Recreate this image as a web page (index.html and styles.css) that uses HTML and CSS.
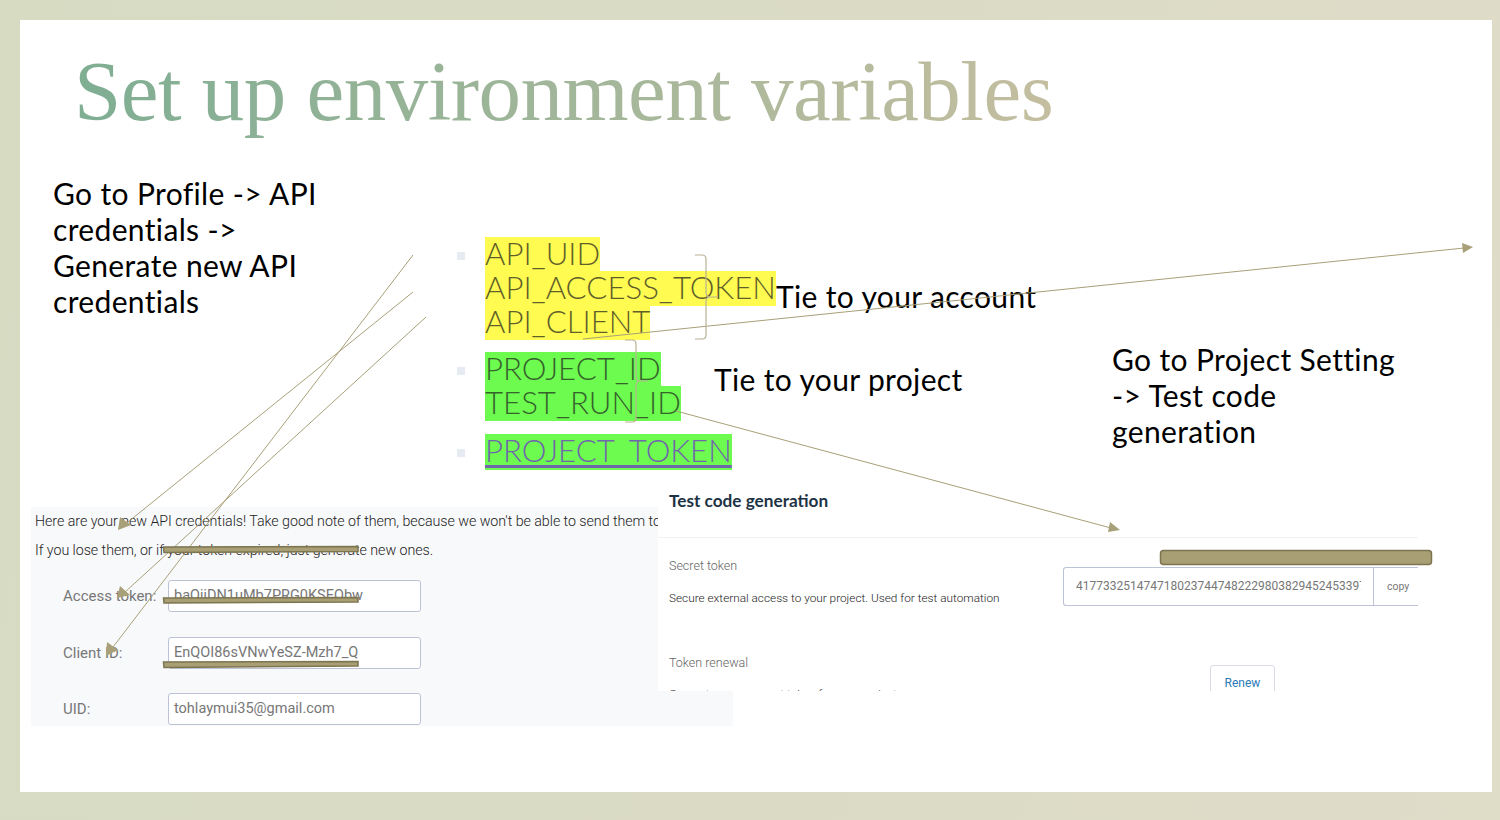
FILE: index.html
```html
<!DOCTYPE html>
<html lang="en">
<head>
<meta charset="utf-8">
<title>Set up environment variables</title>
<link rel="stylesheet" href="styles.css">
</head>
<body>
<main class="slide">
  <h1 class="title">Set up environment variables</h1>
  <p class="note note-profile">Go to Profile -&gt; API<br>credentials -&gt;<br>Generate new API<br>credentials</p>
  <ul class="vars">
    <li class="var-group">
      <span class="hl yellow"><span class="hl-text">API_UID</span></span>
      <span class="hl yellow"><span class="hl-text">API_ACCESS_TOKEN</span></span>
      <span class="hl yellow"><span class="hl-text">API_CLIENT</span></span>
    </li>
    <li class="var-group">
      <span class="hl green"><span class="hl-text">PROJECT_ID</span></span>
      <span class="hl green"><span class="hl-text">TEST_RUN_ID</span></span>
    </li>
    <li class="var-group">
      <a class="hl green link"><span class="hl-text">PROJECT_TOKEN</span></a>
    </li>
  </ul>
  <p class="note note-account">Tie to your account</p>
  <p class="note note-project">Tie to your project</p>
  <p class="note note-setting">Go to Project Setting<br>-&gt; Test code<br>generation</p>

  <section class="shot creds">
    <p class="creds-line">Here are your new API credentials! Take good note of them, because we won't be able to send them to you again.</p>
    <p class="creds-line">If you lose them, or if your token expired, just generate new ones.</p>
    <div class="field"><span class="field-label">Access token:</span><span class="field-input">baQjjDN1uMb7PRG0KSEQbw</span></div>
    <div class="field"><span class="field-label">Client ID:</span><span class="field-input">EnQOI86sVNwYeSZ-Mzh7_Q</span></div>
    <div class="field"><span class="field-label">UID:</span><span class="field-input">tohlaymui35@gmail.com</span></div>
  </section>

  <section class="shot testcode">
    <h2 class="tc-title">Test code generation</h2>
    <div class="tc-row">
      <div class="tc-text">
        <h3 class="tc-label">Secret token</h3>
        <p class="tc-desc">Secure external access to your project. Used for test automation</p>
      </div>
      <div class="token-group"><span class="token-value"><span class="token-digits">4177332514747180237447482229803829452453397</span></span><span class="token-copy">copy</span></div>
    </div>
    <div class="tc-row tc-row-renew">
      <div class="tc-text">
        <h3 class="tc-label">Token renewal</h3>
        <p class="tc-desc">Generate a new secret token for your project</p>
      </div>
      <span class="renew">Renew</span>
    </div>
  </section>

  <svg class="overlay" width="1500" height="820" viewBox="0 0 1500 820" aria-hidden="true">
    <g class="leader">
      <path d="M413 255 L110 651"/>
      <path d="M413 292 L123 526"/>
      <path d="M426 317 L124 593"/>
      <path d="M583 339 L1464 248"/>
      <path d="M676 411 L1111 528"/>
    </g>
    <g class="head">
      <path d="M118 530 L120 517 L131 525 Z"/>
      <path d="M117 598 L120 586 L130 595 Z"/>
      <path d="M106 656 L107 642 L118 650 Z"/>
      <path d="M1473 247 L1462 243 L1463 253 Z"/>
      <path d="M1120 530 L1110 522 L1108 532 Z"/>
    </g>
    <g class="brace">
      <path d="M695 255 H702 Q706 255 706 259 V292 Q706 297 710 297 H718 M710 297 Q706 297 706 302 V335 Q706 339 702 339 H695"/>
      <path d="M625 340 H632 Q636 340 636 344 V376 Q636 381 640 381 H648 M640 381 Q636 381 636 386 V418 Q636 422 632 422 H625"/>
    </g>
    <g class="redact">
      <path d="M163.5 547 L358 546.5 L358 551.5 L164 552.5 Z"/>
      <path d="M163.5 598 L358 597.5 L358 602 L164 603 Z"/>
      <path d="M163.5 662 L358 661.5 L358 666 L164 667.5 Z"/>
      <rect x="1160.5" y="550.5" width="271" height="14" rx="3"/>
    </g>
  </svg>
</main>
</body>
</html>
```
FILE: styles.css
```css
* { box-sizing: border-box; }
html, body { margin: 0; height: 820px; overflow: hidden; }
body {
  background: linear-gradient(100deg, #d7dbc2, #dfdcc8);
  padding: 20px 8px 28px 20px;
  font-family: "Lato", "Liberation Sans", sans-serif;
}
.slide { position: relative; width: 1472px; height: 772px; background: #fff; }
.title {
  position: absolute; left: 54px; top: 19px; margin: 0;
  font: 400 85px/104px "Liberation Serif", serif;
  letter-spacing: -.52px; white-space: nowrap;
  background: linear-gradient(90deg, #7fae93, #c4bea0);
  -webkit-background-clip: text; background-clip: text; color: transparent;
}
.note { position: absolute; margin: 0; font-size: 30px; line-height: 36px; letter-spacing: .35px; color: #000; white-space: nowrap; }
.note-profile { left: 33px; top: 155px; }
.note-account { left: 756px; top: 258px; }
.note-project { left: 694px; top: 341px; }
.note-setting { left: 1092px; top: 321px; }
.vars {
  position: absolute; left: 437px; top: 217px; margin: 0; padding: 0;
  list-style: none; font-weight: 300; font-size: 31.2px; line-height: 34px;
}
.var-group { position: relative; padding-left: 28px; margin-bottom: 13px; white-space: nowrap; }
.var-group:nth-child(2) { margin-bottom: 14px; }
.var-group::before {
  content: ""; position: absolute; left: 0; top: 15px;
  width: 8px; height: 8px; background: #e6ebf1;
}
.hl { display: block; width: fit-content; height: 35px; margin-bottom: -1px; }
.hl-text { position: relative; top: -1px; }
.yellow { background: #fffb50; color: #5f5f2a; }
.green { background: #6dfb4f; color: #35632c; }
.link { height: 36px; color: #7066ac; text-decoration: underline; text-decoration-thickness: 3px; }
.shot { position: absolute; overflow: hidden; font-family: "Roboto", sans-serif; }
.creds {
  left: 11px; top: 487px; width: 702px; height: 219px;
  background: #f8f9fb; padding: 5px 4px 0; font-size: 14.25px; font-weight: 300; color: #222;
}
.creds-line { margin: 0 0 10px; line-height: 19px; letter-spacing: -.05px; white-space: nowrap; }
.creds-line:nth-of-type(2) { margin-bottom: 20px; }
.field { display: flex; align-items: center; height: 32px; margin-bottom: 24.5px; padding-left: 28px; color: #777; font-weight: 400; }
.field-label { width: 105px; font-size: 15px; }
.field-input {
  width: 253px; height: 32px; padding: 0 5px; line-height: 30px;
  background: #fff; border: 1px solid #bcc3d6; border-radius: 3px; color: #777; font-size: 14.5px;
}
.testcode { left: 638px; top: 463px; width: 760px; height: 208px; background: #fff; }
.tc-title {
  margin: 0; padding: 7px 11px 0; height: 55px; border-bottom: 1px solid #f1f1f1;
  font: 700 17.2px/22px "Lato", sans-serif; color: #1d3345;
}
.tc-row { display: flex; justify-content: space-between; padding: 0 0 0 11px; height: 97px; }
.tc-label { margin: 0; padding-top: 20px; font-size: 12.5px; line-height: 16px; font-weight: 300; color: #666; }
.tc-desc { margin: 15px 0 0; font-size: 11.8px; line-height: 18px; font-weight: 300; color: #222; }
.tc-row-renew .tc-desc { margin-top: 14px; }
.token-group {
  display: flex; width: 355px; height: 39px; margin-top: 29px;
  border: 1px solid #bcc3d6; border-right: 0; border-radius: 3px 0 0 3px; color: #777; font-size: 12px; line-height: 37px;
}
.token-value { width: 310px; padding: 0 12px; border-right: 1px solid #bcc3d6; }
.token-digits { display: block; overflow: hidden; white-space: nowrap; }
.token-copy { padding-left: 13px; font-size: 10.5px; }
.tc-row-renew { height: 60px; }
.renew {
  width: 65px; height: 40px; margin: 30px 143px 0 0; text-align: center; line-height: 34px;
  border: 1px solid #d9dce4; border-radius: 3px; color: #2a7ab8; font-size: 12px;
}
.overlay { position: absolute; left: -20px; top: -20px; pointer-events: none; }
.leader path { fill: none; stroke: #a8a078; stroke-width: 1; }
.head path { fill: #a8a078; }
.brace path { fill: none; stroke: #b8b294; stroke-width: 1.2; }
.redact path, .redact rect { fill: #a89f74; stroke: #7d7450; stroke-width: 1.5; }
```
